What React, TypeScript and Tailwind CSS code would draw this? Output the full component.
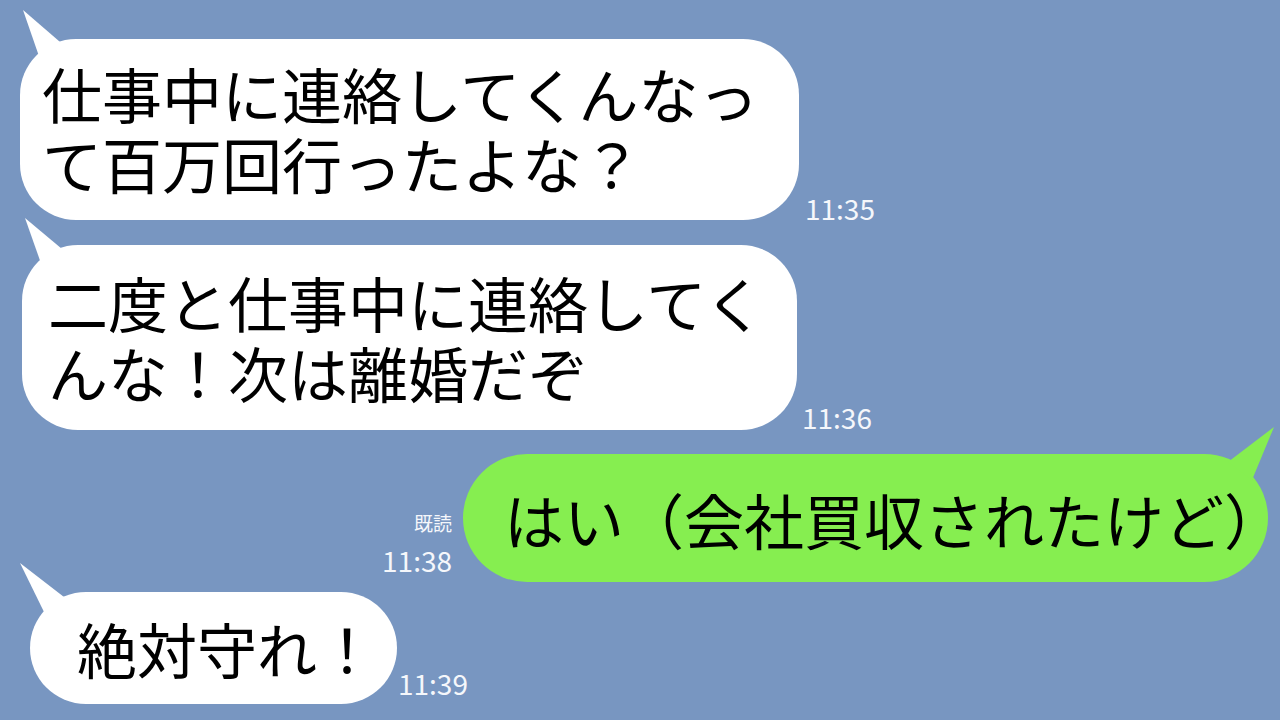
import React from 'react';

const FONT = { fontFamily: '"Noto Sans CJK JP", "Noto Sans", sans-serif' };

function LeftTail({ points }: { points: string }) {
  return (
    <svg className="absolute left-0 top-0 overflow-visible" width="1" height="1">
      <polygon points={points} fill="#ffffff" />
    </svg>
  );
}

function Time({ text, className }: { text: string; className?: string }) {
  return (
    <span className={`text-[28px] leading-none text-[#f5f7fb] whitespace-nowrap ${className ?? ''}`}>
      {text}
    </span>
  );
}

export default function App() {
  return (
    <div className="w-[1280px] h-[720px] overflow-hidden bg-[#7896c1] flex flex-col text-black" style={FONT}>
      {/* message 1 */}
      <div className="flex items-end ml-[20px] mt-[39px]">
        <div className="relative w-[779px] h-[181px] bg-white rounded-[56px] pl-[22px] pt-[19px] text-[60px] leading-[70px] whitespace-nowrap">
          <LeftTail points="3,-29 21,23 47,9" />
          <span className="relative">
            仕事中に連絡してくんなっ
            <br />
            て百万回行ったよな？
          </span>
        </div>
        <Time text="11:35" className="ml-[6px] mb-[-2px]" />
      </div>

      {/* message 2 */}
      <div className="flex items-end ml-[22px] mt-[25px]">
        <div className="relative w-[775px] h-[185px] bg-white rounded-[56px] pl-[26px] pt-[22px] text-[60px] leading-[70px] whitespace-nowrap">
          <LeftTail points="3,-27 21,24 46,9" />
          <span className="relative">
            二度と仕事中に連絡してく
            <br />
            んな！次は離婚だぞ
          </span>
        </div>
        <Time text="11:36" className="ml-[5px] mb-[-1px]" />
      </div>

      {/* message 3 (mine) */}
      <div className="flex items-end justify-end mr-[12px] mt-[24px]">
        <div className="flex flex-col items-end mr-[11px] mb-[8px] text-[#f5f7fb]">
          <span className="text-[19px] leading-none mb-[14px]">既読</span>
          <Time text="11:38" />
        </div>
        <div className="relative w-[805px] h-[128px] bg-[#86ee50] rounded-full pl-[41px] flex items-center text-[60px] leading-[70px] whitespace-nowrap">
          <svg className="absolute right-0 top-0 overflow-visible" width="1" height="1">
            <polygon points="7,-27 -39,8 -15,26" fill="#86ee50" />
          </svg>
          <span className="relative pt-[2px]">
            はい（会社買収されたけど<span className="tracking-[-24px]">）</span>
          </span>
        </div>
      </div>

      {/* message 4 */}
      <div className="flex items-end ml-[30px] mt-[10px]">
        <div className="relative w-[367px] h-[112px] bg-white rounded-full pl-[47px] flex items-center text-[60px] leading-[70px] whitespace-nowrap">
          <LeftTail points="-10,-29 15,22 34,5" />
          <span className="relative">絶対守れ！</span>
        </div>
        <Time text="11:39" className="ml-[1px] mb-[7px]" />
      </div>
    </div>
  );
}
